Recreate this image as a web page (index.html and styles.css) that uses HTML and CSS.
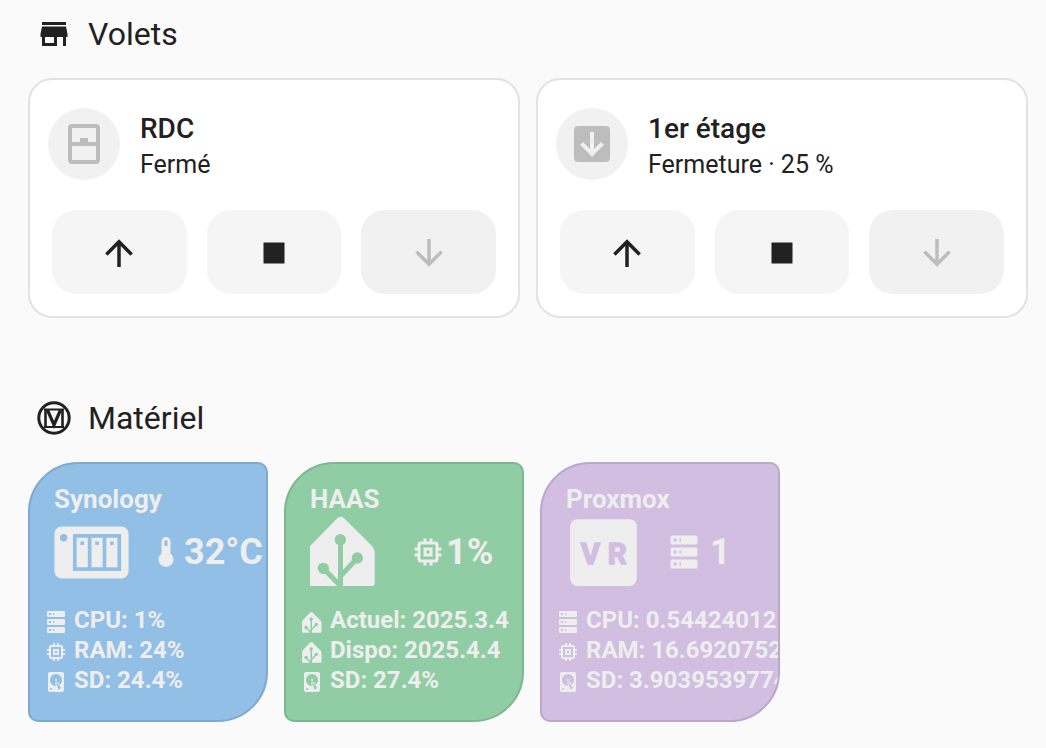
FILE: index.html
```html
<!DOCTYPE html>
<html lang="fr">
<head>
<meta charset="utf-8">
<title>Maison</title>
<meta name="viewport" content="width=device-width, initial-scale=1">
<link rel="stylesheet" href="styles.css">
</head>
<body>
<svg class="sprite" aria-hidden="true">
  <symbol id="store" viewBox="0 0 24 24"><path d="M12,18H6V14H12M21,14V12L20,7H4L3,12V14H4V20H14V14H18V20H20V14M20,4H4V6H20V4Z"/></symbol>
  <symbol id="material" viewBox="0 0 36 36"><g fill="none" stroke="currentColor"><circle cx="18" cy="18" r="15.200" stroke-width="3"/><path stroke-width="2.200" d="M8 9.500H28M8 27H28"/><path stroke-width="2.600" d="M9.500 9V27M26.500 9V27"/><path stroke-width="3.200" d="M11.500 10L18 25L24.500 10"/></g></symbol>
  <symbol id="window-closed" viewBox="0 0 24 24"><path d="M6,11H10V9H14V11H18V4H6V11M18,13H6V20H18V13M6,2H18A2,2 0 0,1 20,4V20A2,2 0 0,1 18,22H6A2,2 0 0,1 4,20V4A2,2 0 0,1 6,2Z"/></symbol>
  <symbol id="arrow-down-box" viewBox="0 0 24 24"><path d="M5,3H19A2,2 0 0,1 21,5V19A2,2 0 0,1 19,21H5A2,2 0 0,1 3,19V5A2,2 0 0,1 5,3M11,6V14.5L7.5,11L6.08,12.42L12,18.34L17.92,12.42L16.5,11L13,14.5V6H11Z"/></symbol>
  <symbol id="arrow-up" viewBox="0 0 24 24"><path d="M13,20H11V8L5.5,13.5L4.08,12.08L12,4.16L19.92,12.08L18.5,13.5L13,8V20Z"/></symbol>
  <symbol id="stop" viewBox="0 0 24 24"><path d="M18,18H6V6H18V18Z"/></symbol>
  <symbol id="arrow-down" viewBox="0 0 24 24"><path d="M11,4H13V16L18.5,10.5L19.92,11.92L12,19.84L4.08,11.92L5.5,10.5L11,16V4Z"/></symbol>
  <symbol id="nas" viewBox="0 0 24 24"><path fill-rule="evenodd" d="M4,5C2.89,5 2,5.89 2,7V17C2,18.11 2.89,19 4,19H20C21.11,19 22,18.11 22,17V7C22,5.89 21.11,5 20,5H4M4.5,7A1,1 0 0,1 5.5,8A1,1 0 0,1 4.5,9A1,1 0 0,1 3.5,8A1,1 0 0,1 4.5,7M7,7H20V17H7V7M8,8V16H11V8H8M12,8V16H15V8H12M16,8V16H19V8H16M9,9H10V10H9V9M13,9H14V10H13V9M17,9H18V10H17V9Z"/></symbol>
  <symbol id="home-assistant" viewBox="-21 -20 240 240"><path d="M0 89L80 6Q92 -5 104 6L184 86Q194 96 194 108V198Q194 208 184 208H0Z"/><g class="cut"><circle cx="91" cy="69" r="17"/><circle cx="142" cy="124" r="17"/><circle cx="40" cy="155" r="17"/><path fill="none" stroke-width="15" d="M91.500 69V209M142 124L92 178M40 155L92 209"/></g></symbol>
  <symbol id="memory" viewBox="0 0 24 24"><path d="M17,17H7V7H17M21,11V9H19V7C19,5.89 18.1,5 17,5H15V3H13V5H11V3H9V5H7C5.89,5 5,5.89 5,7V9H3V11H5V13H3V15H5V17A2,2 0 0,0 7,19H9V21H11V19H13V21H15V19H17A2,2 0 0,0 19,17V15H21V13H19V11M13,13H11V11H13M15,9H9V15H15V9Z"/></symbol>
  <symbol id="server" viewBox="0 0 24 24"><path d="M4,1H20A1,1 0 0,1 21,2V6A1,1 0 0,1 20,7H4A1,1 0 0,1 3,6V2A1,1 0 0,1 4,1M4,9H20A1,1 0 0,1 21,10V14A1,1 0 0,1 20,15H4A1,1 0 0,1 3,14V10A1,1 0 0,1 4,9M4,17H20A1,1 0 0,1 21,18V22A1,1 0 0,1 20,23H4A1,1 0 0,1 3,22V18A1,1 0 0,1 4,17M9,5H10V3H9V5M9,13H10V11H9V13M9,21H10V19H9V21M5,3V5H7V3H5M5,11V13H7V11H5M5,19V21H7V19H5Z"/></symbol>
  <symbol id="harddisk" viewBox="0 0 24 24"><path d="M6,2H18A2,2 0 0,1 20,4V20A2,2 0 0,1 18,22H6A2,2 0 0,1 4,20V4A2,2 0 0,1 6,2M12,4A6,6 0 0,0 6,10C6,13.31 8.69,16 12.1,16L11.22,13.77C10.95,13.29 11.11,12.68 11.59,12.4L12.45,11.9C12.93,11.63 13.54,11.79 13.82,12.27L15.74,14.69C17.12,13.59 18,11.9 18,10A6,6 0 0,0 12,4M12,9A1,1 0 0,1 13,10A1,1 0 0,1 12,11A1,1 0 0,1 11,10A1,1 0 0,1 12,9M7,18A1,1 0 0,0 6,19A1,1 0 0,0 7,20A1,1 0 0,0 8,19A1,1 0 0,0 7,18M12.09,13.27L14.58,19.58L17.17,18.08L12.95,12.77L12.09,13.27Z"/></symbol>
  <symbol id="thermometer" viewBox="0 0 24 24"><path fill-rule="evenodd" d="M15 13V5A3 3 0 0 0 9 5V13A5 5 0 1 0 15 13M12 4A1 1 0 0 1 13 5V8H11V5A1 1 0 0 1 12 4Z"/></symbol>
  <symbol id="vr" viewBox="0 0 24 24"><rect x="3" y="3" width="18" height="18" rx="2"/><g class="letters"><text x="8.500" y="15">V</text><text x="15.700" y="15">R</text></g></symbol>
</svg>

<main class="dashboard">
  <section>
    <h2 class="heading"><svg class="icon-m"><use href="#store"/></svg>Volets</h2>
    <div class="covers">
      <article class="cover">
        <div class="cover-info">
          <span class="shape"><svg class="icon-l"><use href="#window-closed"/></svg></span>
          <div><h3 class="cover-name">RDC</h3><p class="cover-state">Fermé</p></div>
        </div>
        <div class="controls">
          <button class="control" aria-label="Ouvrir RDC"><svg class="icon-c"><use href="#arrow-up"/></svg></button>
          <button class="control" aria-label="Arrêter RDC"><svg class="icon-c"><use href="#stop"/></svg></button>
          <button class="control" aria-label="Fermer RDC" disabled><svg class="icon-c"><use href="#arrow-down"/></svg></button>
        </div>
      </article>
      <article class="cover">
        <div class="cover-info">
          <span class="shape"><svg class="icon-l"><use href="#arrow-down-box"/></svg></span>
          <div><h3 class="cover-name">1er étage</h3><p class="cover-state">Fermeture · 25 %</p></div>
        </div>
        <div class="controls">
          <button class="control" aria-label="Ouvrir 1er étage"><svg class="icon-c"><use href="#arrow-up"/></svg></button>
          <button class="control" aria-label="Arrêter 1er étage"><svg class="icon-c"><use href="#stop"/></svg></button>
          <button class="control" aria-label="Fermer 1er étage" disabled><svg class="icon-c"><use href="#arrow-down"/></svg></button>
        </div>
      </article>
    </div>
  </section>

  <section>
    <h2 class="heading"><svg class="icon-m"><use href="#material"/></svg>Matériel</h2>
    <div class="devices">
      <article class="device blue">
        <h3 class="device-name">Synology</h3>
        <div class="summary">
          <svg class="icon-xl"><use href="#nas"/></svg>
          <div class="value"><svg class="icon-m"><use href="#thermometer"/></svg>32°C</div>
        </div>
        <ul class="stats">
          <li><svg class="icon-s"><use href="#server"/></svg>CPU: 1%</li>
          <li><svg class="icon-s"><use href="#memory"/></svg>RAM: 24%</li>
          <li><svg class="icon-s"><use href="#harddisk"/></svg>SD: 24.4%</li>
        </ul>
      </article>
      <article class="device green">
        <h3 class="device-name">HAAS</h3>
        <div class="summary">
          <svg class="icon-home"><use href="#home-assistant"/></svg>
          <div class="value inset"><svg class="icon-m"><use href="#memory"/></svg>1%</div>
        </div>
        <ul class="stats">
          <li><svg class="icon-s"><use href="#home-assistant"/></svg>Actuel: 2025.3.4</li>
          <li><svg class="icon-s"><use href="#home-assistant"/></svg>Dispo: 2025.4.4</li>
          <li><svg class="icon-s"><use href="#harddisk"/></svg>SD: 27.4%</li>
        </ul>
      </article>
      <article class="device purple">
        <h3 class="device-name">Proxmox</h3>
        <div class="summary">
          <svg class="icon-xl"><use href="#vr"/></svg>
          <div class="value inset spaced"><svg class="icon-m"><use href="#server"/></svg>1</div>
        </div>
        <ul class="stats">
          <li><svg class="icon-s"><use href="#server"/></svg>CPU: 0.54424012</li>
          <li><svg class="icon-s"><use href="#memory"/></svg>RAM: 16.6920752</li>
          <li><svg class="icon-s"><use href="#harddisk"/></svg>SD: 3.9039539774</li>
        </ul>
      </article>
    </div>
  </section>
</main>
</body>
</html>
```
FILE: styles.css
```css
* { box-sizing: border-box; }

body {
  margin: 0;
  background: #fafafa;
  color: #212121;
  font-family: Roboto, "Liberation Sans", sans-serif;
}

h2, h3, p, ul { margin: 0; padding: 0; }
svg { flex: none; fill: currentColor; }
.sprite { display: none; }

.icon-s { width: 24px; height: 24px; }
.icon-m { width: 36px; height: 36px; }
.icon-c { width: 42px; height: 42px; }
.icon-l { width: 48px; height: 48px; }
.icon-xl { width: 89px; height: 89px; }
.icon-home { width: 80px; height: 80px; }

.dashboard {
  display: flex;
  flex-direction: column;
  gap: 72px;
  padding: 6px 18px 26px 28px;
}

.heading {
  display: flex;
  align-items: center;
  gap: 16px;
  height: 56px;
  margin-bottom: 16px;
  padding-left: 8px;
  font-size: 32px;
  font-weight: 400;
}

.covers {
  display: grid;
  grid-template-columns: 1fr 1fr;
  gap: 16px;
}

.cover {
  padding: 28px 22px 22px;
  border: 2px solid #e2e2e2;
  border-radius: 24px;
  background: #fff;
}

.cover-info {
  display: flex;
  align-items: center;
  gap: 20px;
  margin-left: -4px;
}

.shape {
  display: grid;
  place-items: center;
  width: 72px;
  height: 72px;
  border-radius: 50%;
  background: #f1f1f1;
  color: #bdbdbd;
}

.cover-name {
  font-size: 28px;
  font-weight: 500;
  line-height: 42px;
}

.cover-state {
  font-size: 25px;
  line-height: 30px;
}

.controls {
  display: grid;
  grid-template-columns: repeat(3, 1fr);
  gap: 20px;
  margin-top: 30px;
}

.control {
  display: grid;
  place-items: center;
  height: 84px;
  padding: 2px 0 0;
  border: 0;
  border-radius: 24px;
  background: #f5f5f5;
  color: #212121;
}

.control:disabled {
  background: #f1f1f1;
  color: #bdbdbd;
}

.devices {
  display: grid;
  grid-template-columns: repeat(auto-fill, 240px);
  gap: 16px;
}

.device {
  height: 260px;
  padding: 20px 0 0 14px;
  overflow: hidden;
  border: 2px solid var(--edge);
  border-radius: 50px 10px;
  background: var(--tint);
  color: #eee;
  font-weight: 700;
  white-space: nowrap;
}

.blue { --tint: #92bfe6; --edge: #7fa9cf; }
.green { --tint: #90cda5; --edge: #80b592; }
.purple { --tint: #d2bee1; --edge: #baa7c9; }

.device-name {
  padding-left: 10px;
  font-size: 26px;
  line-height: 30px;
}

.summary {
  display: grid;
  grid-template-columns: 89px 1fr;
  grid-template-rows: 76px;
  align-items: center;
  margin-left: 3px;
}

.icon-home { align-self: end; }

.value {
  display: flex;
  align-items: center;
  margin-left: 12px;
  font-size: 36px;
}

.inset { margin-left: 18px; }
.spaced { gap: 8px; }

.stats {
  margin-top: 17px;
  list-style: none;
  font-size: 24px;
  line-height: 26px;
}

.stats li {
  display: flex;
  gap: 6px;
  height: 30px;
}

.stats svg { margin-top: 3px; }

.cut { fill: var(--tint); stroke: var(--tint); }
.cut circle { stroke: none; }

.letters {
  fill: var(--tint);
  stroke: var(--tint);
  stroke-width: 0.4px;
  font-size: 8px;
  font-weight: 700;
  text-anchor: middle;
}
```
